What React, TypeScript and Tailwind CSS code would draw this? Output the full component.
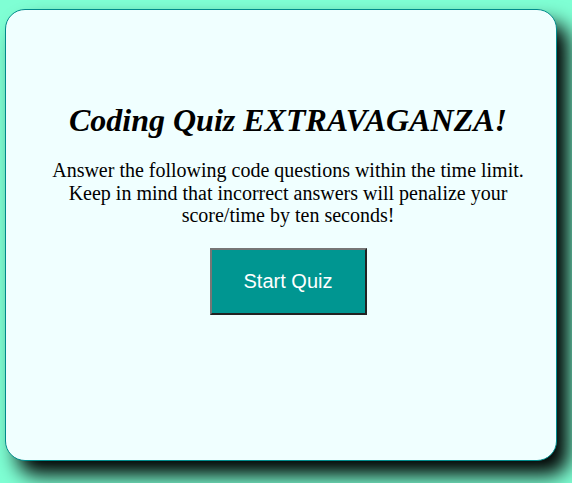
export default function App() {
  return (
    <div className="w-[572px] h-[483px] bg-[#7fffd4] pt-[9px] pl-[5px] overflow-hidden">
      <div
        className="w-[552px] h-[452px] bg-[#f0ffff] border border-[#008b8b] rounded-[20px] shadow-[12px_14px_20px_#000000] flex flex-col items-center pt-[92px] pl-[14px] text-center"
        style={{ fontFamily: '"Liberation Serif", "Times New Roman", serif' }}
      >
        <h1 className="text-[32px] font-bold italic leading-[37px] text-black">Coding Quiz EXTRAVAGANZA!</h1>
        <p className="mt-[20px] text-[20px] leading-[22.5px] text-black w-[480px]">
          Answer the following code questions within the time limit. Keep in mind that incorrect answers will penalize your
          score/time by ten seconds!
        </p>
        <button
          className="mt-[21px] w-[157px] h-[67px] bg-[#009691] text-white text-[20px] border-2 border-t-[#767676] border-l-[#767676] border-b-[#222222] border-r-[#222222]"
          style={{ fontFamily: '"Liberation Sans", Arial, sans-serif' }}
        >
          Start Quiz
        </button>
      </div>
    </div>
  );
}
